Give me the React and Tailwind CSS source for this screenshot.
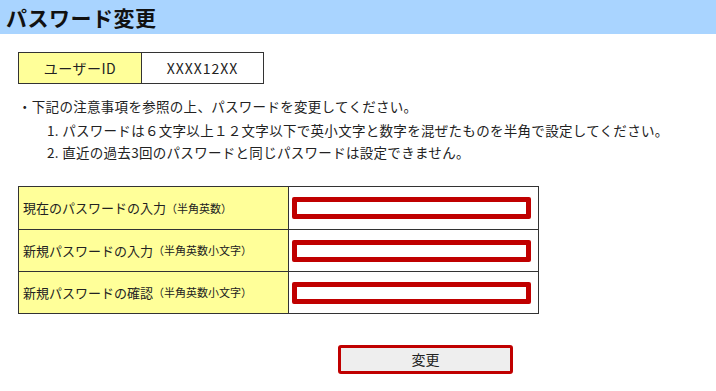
import React from 'react';

const font = { fontFamily: '"Noto Sans CJK JP", "Noto Sans", sans-serif' };

const rows = [
    { label: '現在のパスワードの入力', note: '（半角英数）' },
    { label: '新規パスワードの入力', note: '（半角英数小文字）' },
    { label: '新規パスワードの確認', note: '（半角英数小文字）' },
];

const App = () => {
    return (
        <div className="w-[716px] h-[391px] bg-white text-[#222] overflow-hidden" style={font}>
            {/* Header */}
            <div className="h-[34px] bg-[#a9d4ff] flex items-center pl-[6px]">
                <h1 className="text-[21px] font-bold leading-none tracking-[0.5px] text-[#111]">パスワード変更</h1>
            </div>

            {/* User ID */}
            <div className="ml-[18px] mt-[18px] flex w-[246px] h-[32px] border border-[#333] text-[14px]">
                <div className="w-[123px] bg-[#ffff99] border-r border-[#333] flex items-center justify-center tracking-[0.5px]">ユーザーID</div>
                <div className="flex-1 flex items-center justify-center tracking-[1px]">XXXX12XX</div>
            </div>

            {/* Notes */}
            <div className="mt-[11px] ml-[18px] text-[13.5px] leading-[22px] tracking-[0.3px]">
                <p>・下記の注意事項を参照の上、パスワードを変更してください。</p>
                <ol className="ml-[29px] mt-[2px]">
                    <li>1. パスワードは６文字以上１２文字以下で英小文字と数字を混ぜたものを半角で設定してください。</li>
                    <li>2. 直近の過去3回のパスワードと同じパスワードは設定できません。</li>
                </ol>
            </div>

            {/* Form table */}
            <div className="ml-[18px] mt-[23px] w-[521px] border border-[#333]">
                {rows.map((r, i) => (
                    <div key={i} className={`flex h-[42px] ${i > 0 ? 'border-t border-[#333]' : ''}`}>
                        <div className="w-[270px] bg-[#ffff99] border-r border-[#333] flex items-center pl-[4px] text-[13px]">
                            {r.label}<span className="text-[11px]">{r.note}</span>
                        </div>
                        <div className="flex-1 flex items-center pl-[3px]">
                            <input type="password" className="w-[239px] h-[22px] border-[5px] border-[#c00000] rounded-[2px] outline-none bg-white" />
                        </div>
                    </div>
                ))}
            </div>

            {/* Submit */}
            <div className="ml-[338px] mt-[31px]">
                <button className="w-[175px] h-[29px] bg-[#eeeeee] border-[3px] border-[#c00000] rounded-[3px] text-[14px] text-[#222] flex items-center justify-center">
                    変更
                </button>
            </div>
        </div>
    );
};

export default App;
